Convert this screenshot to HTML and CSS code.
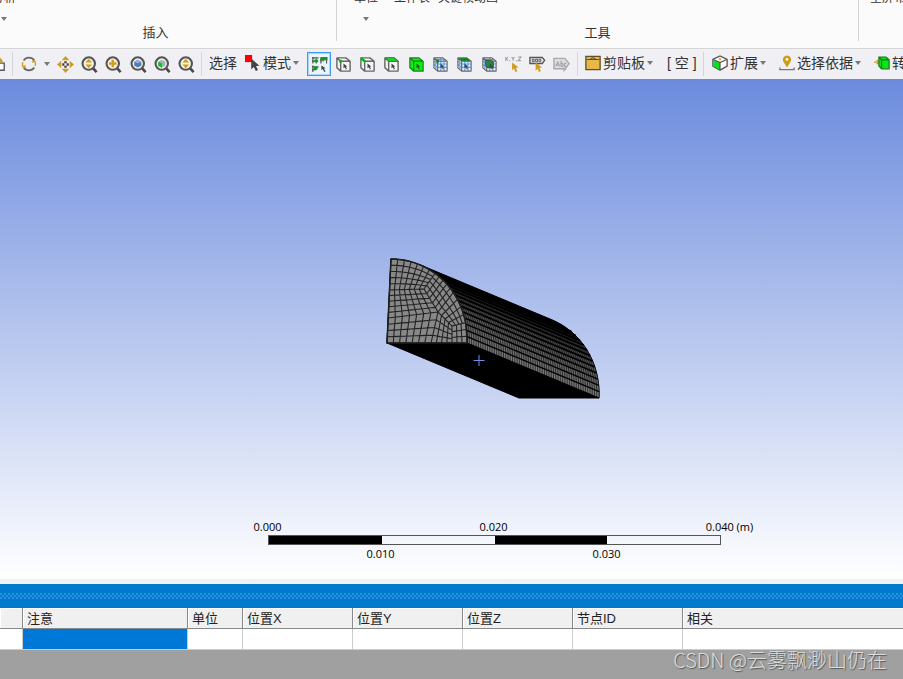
FILE: index.html
```html
<!DOCTYPE html>
<html lang="zh-CN">
<head>
<meta charset="utf-8">
<title>网格</title>
<link rel="stylesheet" href="styles.css">
</head>
<body>
<svg class="defs" aria-hidden="true">
  <symbol id="lens" viewBox="0 0 18 18">
    <path d="M12.500 12.500L16.500 17" stroke="#484848" stroke-width="2.800"/>
    <circle cx="8.200" cy="8" r="6.600" fill="#f3f0e6" stroke="#555" stroke-width="2.200"/>
  </symbol>
  <symbol id="cube" viewBox="0 0 18 18">
    <path d="M2 2h9.500L16 5.500V16H6L2 12.500z" fill="#f5f5f5"/>
    <path d="M2 2h9.500L16 5.500V16H6L2 12.500zM2 2l4 3.500M6 16V5.500h10" fill="none" stroke="#666" stroke-width="1.500" stroke-linejoin="round"/>
  </symbol>
  <symbol id="pointer" viewBox="0 0 18 18">
    <path d="M9 8v5l1.300-1.100 1.300 2.300 1-.6-1.200-2.200 1.600-.3z" fill="#444"/>
  </symbol>
  <symbol id="meshcube" viewBox="0 0 18 18">
    <path d="M2 2h9.500L16 5.500V16H6L2 12.500z" fill="#e4effc"/>
    <path d="M9.300 2l0 14M12.700 4v12M2 5.500l4 3h10M2 9l4 3h10M4 3.500v11M4 3.800h9" fill="none" stroke="#5da2ee" stroke-width="1.200"/>
    <path d="M2 2h9.500L16 5.500V16H6L2 12.500zM2 2l4 3.500M6 16V5.500h10" fill="none" stroke="#666" stroke-width="1.200" stroke-linejoin="round"/>
  </symbol>
</svg>

<header class="ribbon">
  <section class="group group-insert">
    <div class="commands"><button class="command">分析<i class="caret"></i></button></div>
    <h2>插入</h2>
  </section>
  <section class="group group-tools">
    <div class="commands">
      <button class="command">单位<i class="caret"></i></button>
      <button class="command">工作表</button>
      <button class="command">关键帧动画</button>
    </div>
    <h2>工具</h2>
  </section>
  <section class="group group-layout">
    <div class="commands"><button class="command">全屏布局</button></div>
  </section>
</header>

<nav class="toolbar">
  <div class="tools tools-start">
    <button class="tool tool-cut" aria-label="适合"><svg viewBox="0 0 18 18"><path d="M5 8h11v8H5z" fill="#fff" stroke="#555" stroke-width="1.500"/><path d="M8 7l4-5 3 5z" fill="#d19c19"/></svg></button>
  </div>
  <div class="tools tools-view">
    <button class="tool" aria-label="旋转"><svg viewBox="0 0 18 18"><path d="M3 5A7.200 7.200 0 0 1 15 5" fill="none" stroke="#666" stroke-width="1.900"/><path d="M15 13A7.200 7.200 0 0 1 3 13" fill="none" stroke="#666" stroke-width="1.900"/><path d="M2 11.500A7.400 7.400 0 0 1 2 7M16 7A7.400 7.400 0 0 1 16 11" fill="none" stroke="#d19c19" stroke-width="1.600"/><path d="M.5 12l4.500-2 .5 4zM17.500 6l-4.500 2-.5-4z" fill="#d19c19"/></svg></button>
    <i class="caret"></i>
  </div>
  <div class="tools tools-zoom">
    <button class="tool" aria-label="平移"><svg viewBox="0 0 18 18"><path d="M9 0l4 4.500H5zM9 18l4-4.500H5zM0 9l4.500-4v8zM18 9l-4.500-4v8z" fill="#d19c19"/><path d="M7.700 5.500h2.600v2.300H7.700zM7.700 10.200h2.600v2.300H7.700zM5.500 7.700h2.300v2.600H5.500zM10.200 7.700h2.300v2.600h-2.300z" fill="#444"/></svg></button>
    <button class="tool" aria-label="缩放"><svg viewBox="0 0 18 18"><use href="#lens"/><path d="M8.200 3l3.500 4h-7zM8.200 13l3.500-4h-7z" fill="#d19c19"/></svg></button>
    <button class="tool" aria-label="放大"><svg viewBox="0 0 18 18"><use href="#lens"/><path d="M8.200 4v8M4.200 8h8" stroke="#d19c19" stroke-width="2.600"/></svg></button>
    <button class="tool" aria-label="缩放至合适"><svg viewBox="0 0 18 18"><use href="#lens"/><path d="M4.500 6l3.700-2L12 6v4.300l-3.800 2-3.700-2z" fill="#4f7cb8"/><path d="M4.500 6l3.700 1.800L12 6 8.200 4z" fill="#8eb4df"/></svg></button>
    <button class="tool" aria-label="缩放至选择"><svg viewBox="0 0 18 18"><use href="#lens"/><path d="M4.500 6l3.700-2L12 6v4.300l-3.800 2-3.700-2z" fill="#a0b4b4"/><path d="M4.500 6l4 2v4.500l-4-2z" fill="#08c91d"/></svg></button>
    <button class="tool" aria-label="框缩放"><svg viewBox="0 0 18 18"><use href="#lens"/><path d="M8.200 3l3.500 4h-7zM8.200 13l3.500-4h-7z" fill="#d19c19"/></svg></button>
  </div>
  <div class="tools tools-mode">
    <span>选择</span>
    <button class="labelled"><svg viewBox="0 0 18 18"><path d="M0 0h8v8H0z" fill="#f00"/><path d="M7 4v12l3-2.600 2.200 4.600 2.400-1.200-2.200-4.400 3.800-.4z" fill="#444"/></svg>模式<i class="caret"></i></button>
  </div>
  <div class="tools tools-filter">
    <button class="tool selected" aria-label="全部"><svg viewBox="0 0 18 18"><path d="M1 2h7M1 5.500h6M2 1v7M5.500 3v5M10.500 2v6M1 11.500h7M2 10v7M1 14.500h5" stroke="#555" stroke-width="1.300"/><path d="M3.500 4h4v2.500h-4zM10 1h7.500v3.500H10zM3 11h4v3H3z" fill="#08a01b"/><path d="M16.500 4v4M10 5h4" stroke="#555" stroke-width="1.200"/><path d="M11 10v5l1.400-1.200 1.700 3.200 1.300-.7-1.700-3 1.800-.3z" fill="#444"/></svg></button>
    <button class="tool" aria-label="顶点"><svg viewBox="0 0 18 18"><use href="#cube"/><path d="M4.500 4h3v3h-3z" fill="#08b51b"/><use href="#pointer"/></svg></button>
    <button class="tool" aria-label="边"><svg viewBox="0 0 18 18"><use href="#cube"/><path d="M2 2l5 4.500" stroke="#08b51b" stroke-width="2.800"/><use href="#pointer"/></svg></button>
    <button class="tool" aria-label="面"><svg viewBox="0 0 18 18"><use href="#cube"/><path d="M2.500 2h9L16 5.500H6z" fill="#0be41c" stroke="#347c35" stroke-width=".8"/><use href="#pointer"/></svg></button>
    <button class="tool" aria-label="几何体"><svg viewBox="0 0 18 18"><path d="M2 2h9.500L16 5.500V16H6L2 12.500zM2 2l4 3.500M6 16V5.500h10" fill="#05f50b" stroke="#267528" stroke-width="1.300"/><use href="#pointer"/></svg></button>
    <button class="tool" aria-label="节点"><svg viewBox="0 0 18 18"><use href="#meshcube"/><path d="M4.500 4h3v3h-3z" fill="#25734a"/><use href="#pointer"/></svg></button>
    <button class="tool" aria-label="单元面"><svg viewBox="0 0 18 18"><use href="#meshcube"/><path d="M3 2h8.500L16 5.500H6z" fill="#218b38"/><path d="M5 3.700h8" stroke="#444" stroke-dasharray="2 1"/><use href="#pointer"/></svg></button>
    <button class="tool" aria-label="单元"><svg viewBox="0 0 18 18"><use href="#meshcube"/><path d="M5 4.500h6l2 2v6H7l-2-2z" fill="#268a3c" stroke="#444"/><use href="#pointer"/></svg></button>
    <button class="tool" aria-label="坐标"><svg viewBox="0 0 18 18"><path d="M0 1l3 4M3 1L0 5M7 1l1.500 2L10 1M8.500 3v2M14 1h3l-3 4h3M5 4.500v1M12 4.500v1" fill="none" stroke="#999" stroke-width="1.100"/><path d="M7.500 7v8l2-1.700L11 17l2-.9-1.500-3.600 2.800-.3z" fill="#d19c19"/></svg></button>
    <button class="tool" aria-label="标签"><svg viewBox="0 0 18 18"><path d="M1 1.500H14L16.500 4.500 14 8H1z" fill="#eee" stroke="#555" stroke-width="1.500"/><path d="M3.500 3.500h2v2.500h-2zM7 3.500h2v2.500H7zM10.500 3.500h2v2.500h-2z" fill="none" stroke="#555"/><path d="M7 7v8.500l2.200-2 1.300 3.500 2-.9-1.500-3.600 2.800-.3z" fill="#d19c19"/></svg></button>
    <button class="tool" aria-label="注释"><svg viewBox="0 0 18 18"><path d="M1 2.500h11.500l4.500 5.500-4 5.500H1z" fill="#ddd" stroke="#aaa" stroke-width="1.500"/><path d="M3 11l2-5 2 5M3.700 9.500h2.500M8.500 5v6M8.500 8h2v3h-2M14 8h-2v3h2" fill="none" stroke="#999"/><path d="M11 12v5l3-3z" fill="#aaa"/></svg></button>
  </div>
  <div class="tools tools-clip">
    <button class="labelled"><svg viewBox="0 0 18 18"><path d="M1 1.500h16v15H1z" fill="#e5b848" stroke="#604f2a" stroke-width="1.500"/><path d="M2 5h14M6 5q3-4 6 0" fill="none" stroke="#604f2a" stroke-width="1.200"/></svg>剪贴板<i class="caret"></i></button>
    <span class="empty">[ 空 ]</span>
  </div>
  <div class="tools tools-extend">
    <button class="labelled"><svg viewBox="0 0 18 18"><path d="M1 5L9 1l8 4v7.500L9 17l-8-4.500z" fill="#fff" stroke="#555" stroke-width="1.500"/><path d="M1.500 5.500L9 8.500V17l-7.500-4.500z" fill="#08e41c"/><path d="M1.500 5L9 8.500 16.500 5M9 8.500V17" fill="none" stroke="#555" stroke-width="1.400"/><path d="M9 3v3M7.500 4.500h3" stroke="#d19c19" stroke-width="1.300"/></svg>扩展<i class="caret"></i></button>
    <button class="labelled by"><svg viewBox="0 0 18 18"><path d="M9 14L5 7.500A4.600 4.600 0 1 1 13 7.500z" fill="#d19c19"/><circle cx="9" cy="5" r="1.600" fill="#fff"/><path d="M1 14v2.500h16V14" fill="none" stroke="#777" stroke-width="1.500"/></svg>选择依据<i class="caret"></i></button>
    <button class="labelled convert"><svg viewBox="0 0 18 18"><path d="M0 8h5M3 5.500L5.500 8 3 10.500" fill="none" stroke="#d19c19" stroke-width="1.600"/><path d="M5.500 2.500h8L17 5.500v10H8.500l-3-3zM5.500 2.500l3 3v10M8.500 5.500H17" fill="#05e811" stroke="#267528" stroke-width="1.400"/></svg>转换</button>
  </div>
</nav>

<main class="viewport">
  <svg class="model" viewBox="0 0 903 500" preserveAspectRatio="xMidYMid meet" role="img" aria-label="网格模型">
    <path id="hull"/>
    <g id="side"></g>
    <path id="face"/>
    <path id="lines"/>
    <path class="cross" d="M473.500 281.500h11M479 276v11"/>
  </svg>
  <div class="scale">
    <span class="t0">0.000</span><span class="t2">0.020</span><span class="t4">0.040 (m)</span>
    <div class="bar"><b></b><b></b><b></b><b></b></div>
    <span class="t1">0.010</span><span class="t3">0.030</span>
  </div>
</main>

<div class="panel-title"></div>
<table class="notes">
  <colgroup><col class="c-mark"><col class="c-note"><col class="c-unit"><col class="c-pos"><col class="c-pos"><col class="c-pos"><col class="c-pos"><col></colgroup>
  <thead><tr><th></th><th>注意</th><th>单位</th><th>位置X</th><th>位置Y</th><th>位置Z</th><th>节点ID</th><th>相关</th></tr></thead>
  <tbody><tr><td></td><td class="current"></td><td></td><td></td><td></td><td></td><td></td><td></td></tr></tbody>
</table>
<footer class="foot">CSDN @云雾飘渺山仍在</footer>
<script src="script.js"></script>
</body>
</html>
```
FILE: styles.css
```css
* { box-sizing: border-box; }
body {
  margin: 0;
  min-height: 100vh;
  display: flex;
  flex-direction: column;
  overflow: hidden;
  font-family: "Liberation Sans", "Noto Sans CJK SC", sans-serif;
  font-size: 13px;
  color: #333;
  background: #a0a0a0;
}
button {
  border: 0;
  margin: 0;
  padding: 0;
  background: none;
  font: inherit;
  color: inherit;
  white-space: nowrap;
}
.defs { position: absolute; width: 0; height: 0; }
.caret {
  border: 3px solid transparent;
  border-top: 4px solid #777;
  border-bottom: 0;
  width: 6px;
  flex: none;
}

.ribbon {
  display: flex;
  height: 49px;
  background: #fbfbfb;
  border-bottom: 1px solid #d5d5d5;
  overflow: hidden;
}
.group {
  height: 41px;
  display: flex;
  flex-direction: column;
  justify-content: space-between;
  border-right: 1px solid #d5d5d5;
}
.group-insert { width: 362px; margin-left: -25px; flex: none; }
.group-tools { flex: 1; }
.group-layout { border: 0; flex: none; width: 44px; }
.group h2 {
  margin: 0;
  font-size: 13px;
  line-height: 16px;
  font-weight: 400;
  text-align: center;
}
.commands {
  display: flex;
  align-items: flex-start;
  gap: 8px;
  margin-top: -11px;
  padding-left: 17px;
  font-size: 12px;
  line-height: 18px;
}
.command {
  display: flex;
  flex-direction: column;
  align-items: center;
  gap: 10px;
}
.group-layout .commands { padding-left: 11px; }
.group-tools .command:first-child { margin-right: 8px; }

.toolbar {
  display: flex;
  align-items: center;
  height: 30px;
  background: #f0f0f4;
  font-size: 14px;
  line-height: 20px;
  overflow: hidden;
}
.tools { display: flex; align-items: center; flex: none; height: 24px; white-space: nowrap; }
.tool {
  width: 24px;
  height: 24px;
  display: flex;
  align-items: center;
  justify-content: center;
}
.toolbar svg { width: 16px; height: 16px; flex: none; display: block; }
.labelled { display: flex; align-items: center; gap: 2px; }
.tools-mode, .tools-clip, .tools-extend { padding-bottom: 2px; }
.tools-start { width: 13px; border-right: 1px solid #d5d5d9; justify-content: flex-end; }
.tool-cut { justify-content: flex-end; padding-right: 6px; }
.tools-view { width: 40px; padding-left: 4px; gap: 3px; }
.tools-zoom {
  width: 149px;
  display: grid;
  grid-template-columns: repeat(6, 1fr);
  justify-items: center;
  border-right: 1px solid #d5d5d9;
  padding-right: 2px;
}
.tools-mode { width: 105px; padding-left: 7px; gap: 8px; }
.tools-filter {
  width: 271px;
  display: grid;
  grid-template-columns: repeat(11, 1fr);
  justify-items: center;
  border-right: 1px solid #d5d5d9;
  padding-right: 3px;
}
.tools-filter svg, .tools-zoom svg { width: 17px; height: 17px; }
.selected { background: #eaf4fd; border: 1px solid #3d9cf0; outline: 1px solid #a9d3fa; outline-offset: -2px; }
.tools-clip { width: 126px; padding-left: 7px; gap: 14px; border-right: 1px solid #d5d5d9; }
.tools-extend { padding-left: 8px; }
.by, .convert { margin-left: 13px; }

.viewport {
  position: relative;
  flex: 1;
  min-height: 320px;
  display: flex;
  flex-direction: column;
  justify-content: flex-end;
  padding-bottom: 17px;
  background: linear-gradient(#6b8bdd, #fff);
}
.model { position: absolute; inset: 0; width: 100%; height: 100%; }
.cross { stroke: #6d8fe8; fill: none; }
.scale {
  position: relative;
  display: grid;
  grid-template-columns: repeat(5, 113px);
  grid-template-rows: 16px 10px 17px;
  align-items: end;
  padding-left: 211px;
  font: 11px/16px "Open Sans", sans-serif;
  color: #000;
  text-align: center;
}
.t0 { grid-area: 1 / 1; }
.t2 { grid-area: 1 / 3; }
.t4 { grid-area: 1 / 5; padding-left: 20px; }
.t1 { grid-area: 3 / 2; }
.t3 { grid-area: 3 / 4; }
.bar {
  grid-area: 2 / 1 / 3 / 6;
  align-self: stretch;
  margin: 0 55px 0 57px;
  display: grid;
  grid-template-columns: repeat(4, 1fr);
  border: 1px solid #555;
}
.bar b { align-self: stretch; }
.bar b:nth-child(odd) { background: #000; }

.panel-title {
  height: 29px;
  border-top: 5px solid #f0f0f0;
  background: #007acc;
  display: flex;
  align-items: center;
}
.panel-title::before {
  content: "";
  flex: 1;
  height: 6px;
  background:
    radial-gradient(circle at 1px 1px, #2a92dc 1px, transparent 1px) 0 0 / 4px 4px,
    radial-gradient(circle at 1px 1px, #2a92dc 1px, transparent 1px) 2px 2px / 4px 4px;
}
.notes { width: 100%; table-layout: fixed; border-collapse: separate; border-spacing: 0; background: #fff; }
.notes th {
  height: 21px;
  padding: 2px 0 0 4px;
  line-height: 18px;
  text-align: left;
  font-weight: 400;
  background: #f0f0f0;
  border-right: 1px solid #888;
  border-bottom: 1px solid #888;
  box-shadow: inset 1px 1px #fff;
  white-space: nowrap;
  color: #222;
}
.notes td { height: 21px; padding: 0; border-right: 1px solid #ccc; border-bottom: 1px solid #ccc; }
.notes th:last-child, .notes td:last-child { border-right: 0; }
.notes td.current { background: #0078d7; }
.c-mark { width: 23px; }
.c-note { width: 165px; }
.c-unit { width: 55px; }
.c-pos { width: 110px; }
.foot {
  height: 29px;
  padding: 0 16px;
  font-size: 20px;
  line-height: 20px;
  font-family: "Noto Sans CJK SC", sans-serif;
  font-weight: 300;
  text-align: right;
  white-space: nowrap;
  color: #ddd;
  text-shadow: 1px 1px 1px #555;
}
```
FILE: script.js
```js
// Draws the extruded quarter-round mesh: the front face and the curved side.
const corner = [387, 264];
const depth = [132, 55];
const rad = Math.PI / 180;
const arc = d => [
  corner[0] + 80 * Math.cos(d * rad) + 4 * Math.sin(d * rad),
  corner[1] - 84 * Math.sin(d * rad)
];
const mix = (a, b, t) => [a[0] + (b[0] - a[0]) * t, a[1] + (b[1] - a[1]) * t];
const back = p => [p[0] + depth[0], p[1] + depth[1]];
const line = pts => "M" + pts.map(p => p[0].toFixed(1) + " " + p[1].toFixed(1)).join("L");
const range = (a, b, n) => Array.from({ length: n + 1 }, (_, i) => a + (b - a) * i / n);
const el = id => document.getElementById(id);
const set = (id, attrs) => Object.entries(attrs).forEach(([n, v]) => el(id).setAttribute(n, v));

const tangent = 68;
const front = range(0, 90, 30).map(arc);
const rear = range(0, tangent, 24).map(a => back(arc(a))).reverse();
set("face", { d: line([corner, ...front]) + "Z", fill: "#888", stroke: "#111", "stroke-width": 1.5 });
set("hull", { d: line([corner, arc(90), arc(tangent), ...rear, back(corner)]) + "Z", stroke: "#000" });

// Curved side: one strip per arc division, fading to black towards the top.
const divisions = range(0, 52, 12);
let side = "";
for (let i = 0; i < divisions.length - 1; i++) {
  const a = arc(divisions[i]), b = arc(divisions[i + 1]);
  const shade = Math.max(0, 120 - i * 7);
  side += `<path d="${line([a, b, back(b), back(a)])}Z" fill="rgb(${shade},${shade},${shade})"/>`;
}
for (const t of range(0, 1, 58)) {
  const ring = range(0, 52, 12).map(arc).map(p => mix(p, back(p), t));
  side += `<path d="${line(ring)}" fill="none" stroke="#000" stroke-width=".8" stroke-opacity=".75"/>`;
}
divisions.forEach((a, i) => {
  side += `<path d="${line([arc(a), back(arc(a))])}" stroke="#000" stroke-width="${(1.2 + i * 0.1).toFixed(1)}"/>`;
});
el("side").innerHTML = side;

// Front face: blocks of quads around two irregular nodes.
let grid = "";
function block(p00, p10, edgeTop, nu, nv) {
  const at = (u, v) => mix(mix(p00, p10, u), edgeTop(u), v);
  range(0, 1, nu).forEach(u => { grid += line(range(0, 1, 8).map(v => at(u, v))); });
  range(0, 1, nv).forEach(v => { grid += line(range(0, 1, 8).map(u => at(u, v))); });
}
const left = y => [corner[0] + (corner[1] - y) * 4 / 84, y];
const L1 = left(211), L2 = left(239);
const Q1 = [424, 210], K = [438, 233], Q2 = [452, 247];
const low = 14, high = 56, middle = 37;
block(L1, Q1, u => arc(90 + (high - 90) * u), 7, 5);
block(L2, K, u => mix(L1, Q1, u), 7, 5);
block(corner, [431, 264], u => mix(L2, K, u), 7, 4);
block([431, 264], [452, 264], u => mix(K, Q2, u), 4, 4);
block([452, 264], arc(0), u => mix(Q2, arc(low), u), 3, 3);
block(Q1, K, u => arc(high + (middle - high) * u), 5, 4);
block(K, Q2, u => arc(middle + (low - middle) * u), 4, 4);
set("lines", { d: grid, fill: "none", stroke: "#222", "stroke-width": 1.1 });
```
